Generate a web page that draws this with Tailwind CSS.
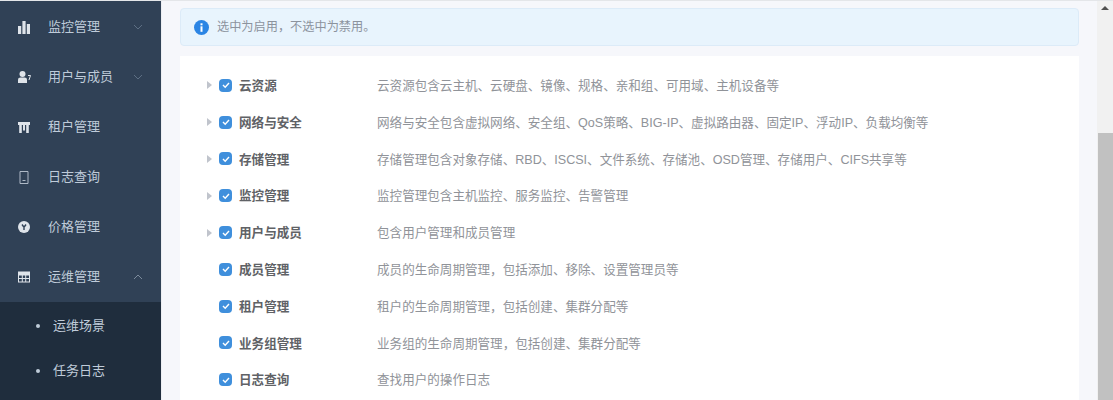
<!DOCTYPE html>
<html lang="zh-CN">
  <head>
    <meta charset="UTF-8" />
    <title>运维场景</title>
    <script src="https://cdn.jsdelivr.net/npm/@tailwindcss/browser@4"></script>
  </head>
  <body class="bg-[#f6f7fb] font-['Liberation_Sans','Noto_Sans_CJK_SC',sans-serif]">
    <div class="flex h-[400px] w-[1113px] overflow-hidden border-t border-[#e4e6e9]">
      <!-- Sidebar -->
      <div class="w-[161px] shrink-0 bg-[#304156] pt-px text-[13px] text-[#bfcbd9]">
        <div class="flex h-[50px] items-center pl-[18px] pr-[18px]">
          <svg class="h-[13px] w-3" viewBox="0 0 12 13" fill="#dfe4ea"><rect x="0" y="5" width="3.2" height="8" /><rect x="4.4" y="0" width="3.2" height="13" /><rect x="8.8" y="3" width="3.2" height="10" /></svg>
          <span class="ml-[18px] flex-1">监控管理</span>
          <svg class="h-2 w-2.5" viewBox="0 0 10 8" fill="none" stroke="#5d6f84"><path d="M1 2l4 4 4-4" /></svg>
        </div>
        <div class="flex h-[50px] items-center pl-[18px] pr-[18px]">
          <svg class="h-3 w-[13px]" viewBox="0 0 13 12" fill="#dfe4ea"><circle cx="4.5" cy="3" r="3" /><path d="M0 12V8.5Q0 6.5 2.5 6.5H6.5Q9 6.5 9 8.5V12z" /><path d="M10 4.5h2.5L11 9" fill="none" stroke="#dfe4ea" /></svg>
          <span class="ml-[17px] flex-1">用户与成员</span>
          <svg class="h-2 w-2.5" viewBox="0 0 10 8" fill="none" stroke="#5d6f84"><path d="M1 2l4 4 4-4" /></svg>
        </div>
        <div class="flex h-[50px] items-center pl-[18px] pr-[18px]">
          <svg class="h-[11px] w-3" viewBox="0 0 12 11" fill="#dfe4ea"><path d="M0 0H12V3H10.8V11H8.2V3H7V8.5H5V3H3.8V11H1.2V3H0z" /></svg>
          <span class="ml-[18px] flex-1">租户管理</span>
        </div>
        <div class="flex h-[50px] items-center pl-[18px] pr-[18px]">
          <svg class="h-[13px] w-3" viewBox="0 0 12 13" fill="none" stroke="#aeb9c6"><path d="M2 0.5H10V12.5H2zM4.5 9.5H7.5" /></svg>
          <span class="ml-[18px] flex-1">日志查询</span>
        </div>
        <div class="flex h-[50px] items-center pl-[18px] pr-[18px]">
          <svg class="h-3 w-3" viewBox="0 0 12 12"><circle cx="6" cy="6" r="6" fill="#dfe4ea" /><path d="M4 3.5L6 6.2L8 3.5M6 6.2V9" fill="none" stroke="#304156" stroke-width="1.4" /></svg>
          <span class="ml-[18px] flex-1">价格管理</span>
        </div>
        <div class="flex h-[50px] items-center pl-[18px] pr-[18px]">
          <svg class="h-3 w-3" viewBox="0 0 12 12" fill="#dfe4ea"><path d="M0 0.5H12V11.5H0zM1 4.5V7H3.8V4.5zM4.8 4.5V7H7.2V4.5zM8.2 4.5V7H11V4.5zM1 8V10.5H3.8V8zM4.8 8V10.5H7.2V8zM8.2 8V10.5H11V8z" fill-rule="evenodd" /></svg>
          <span class="ml-[18px] flex-1">运维管理</span>
          <svg class="h-2 w-2.5" viewBox="0 0 10 8" fill="none" stroke="#7c8b9c"><path d="M1 6l4-4 4 4" /></svg>
        </div>
        <div class="h-full bg-[#1f2d3d] pt-px">
          <div class="flex h-[45px] items-center pl-9">
            <span class="h-1 w-1 rounded-full bg-[#bfcbd9]"></span>
            <span class="ml-[13px]">运维场景</span>
          </div>
          <div class="flex h-[45px] items-center pl-9">
            <span class="h-1 w-1 rounded-full bg-[#bfcbd9]"></span>
            <span class="ml-[13px]">任务日志</span>
          </div>
        </div>
      </div>

      <!-- Main content -->
      <div class="w-[936px] shrink-0 border-l border-[#eceef2] pl-[18px] pr-[18px] pt-[7px]">
        <div class="flex h-[38px] items-center rounded border border-[#dcebf8] bg-[#e8f4fd] pl-[13px] text-[12.2px] text-[#8c939d]">
          <svg class="h-[15px] w-[15px]" viewBox="0 0 15 15"><circle cx="7.5" cy="7.5" r="7.5" fill="#2b85e4" /><rect x="6.5" y="6.3" width="2" height="5.5" fill="#fff" /><rect x="6.5" y="3.3" width="2" height="2" fill="#fff" /></svg>
          <span class="ml-[8px]">选中为启用，不选中为禁用。</span>
        </div>
        <div class="mt-[10px] h-[400px] bg-white pt-[11px] text-[12.57px]">
          <div class="flex h-[36.8px] items-center">
            <span class="ml-[27px] w-[12px]"><span class="block h-0 w-0 border-y-[4px] border-l-[5px] border-y-transparent border-l-[#c0c4cc]"></span></span>
            <span class="flex h-[13px] w-[13px] items-center justify-center rounded-sm bg-[#3f8fdc]"><svg class="h-2.5 w-2.5" viewBox="0 0 10 10" fill="none" stroke="#fff" stroke-width="1.4"><path d="M2 5l2.2 2.2L8 3" /></svg></span>
            <span class="ml-[7px] w-[138px] pt-[2px] font-bold text-[#606266]">云资源</span>
            <span class="pt-[2px] text-[#909399]">云资源包含云主机、云硬盘、镜像、规格、亲和组、可用域、主机设备等</span>
          </div>
          <div class="flex h-[36.8px] items-center">
            <span class="ml-[27px] w-[12px]"><span class="block h-0 w-0 border-y-[4px] border-l-[5px] border-y-transparent border-l-[#c0c4cc]"></span></span>
            <span class="flex h-[13px] w-[13px] items-center justify-center rounded-sm bg-[#3f8fdc]"><svg class="h-2.5 w-2.5" viewBox="0 0 10 10" fill="none" stroke="#fff" stroke-width="1.4"><path d="M2 5l2.2 2.2L8 3" /></svg></span>
            <span class="ml-[7px] w-[138px] pt-[2px] font-bold text-[#606266]">网络与安全</span>
            <span class="pt-[2px] text-[#909399]">网络与安全包含虚拟网络、安全组、QoS策略、BIG-IP、虚拟路由器、固定IP、浮动IP、负载均衡等</span>
          </div>
          <div class="flex h-[36.8px] items-center">
            <span class="ml-[27px] w-[12px]"><span class="block h-0 w-0 border-y-[4px] border-l-[5px] border-y-transparent border-l-[#c0c4cc]"></span></span>
            <span class="flex h-[13px] w-[13px] items-center justify-center rounded-sm bg-[#3f8fdc]"><svg class="h-2.5 w-2.5" viewBox="0 0 10 10" fill="none" stroke="#fff" stroke-width="1.4"><path d="M2 5l2.2 2.2L8 3" /></svg></span>
            <span class="ml-[7px] w-[138px] pt-[2px] font-bold text-[#606266]">存储管理</span>
            <span class="pt-[2px] text-[#909399]">存储管理包含对象存储、RBD、ISCSI、文件系统、存储池、OSD管理、存储用户、CIFS共享等</span>
          </div>
          <div class="flex h-[36.8px] items-center">
            <span class="ml-[27px] w-[12px]"><span class="block h-0 w-0 border-y-[4px] border-l-[5px] border-y-transparent border-l-[#c0c4cc]"></span></span>
            <span class="flex h-[13px] w-[13px] items-center justify-center rounded-sm bg-[#3f8fdc]"><svg class="h-2.5 w-2.5" viewBox="0 0 10 10" fill="none" stroke="#fff" stroke-width="1.4"><path d="M2 5l2.2 2.2L8 3" /></svg></span>
            <span class="ml-[7px] w-[138px] pt-[2px] font-bold text-[#606266]">监控管理</span>
            <span class="pt-[2px] text-[#909399]">监控管理包含主机监控、服务监控、告警管理</span>
          </div>
          <div class="flex h-[36.8px] items-center">
            <span class="ml-[27px] w-[12px]"><span class="block h-0 w-0 border-y-[4px] border-l-[5px] border-y-transparent border-l-[#c0c4cc]"></span></span>
            <span class="flex h-[13px] w-[13px] items-center justify-center rounded-sm bg-[#3f8fdc]"><svg class="h-2.5 w-2.5" viewBox="0 0 10 10" fill="none" stroke="#fff" stroke-width="1.4"><path d="M2 5l2.2 2.2L8 3" /></svg></span>
            <span class="ml-[7px] w-[138px] pt-[2px] font-bold text-[#606266]">用户与成员</span>
            <span class="pt-[2px] text-[#909399]">包含用户管理和成员管理</span>
          </div>
          <div class="flex h-[36.8px] items-center pl-[39px]">
            <span class="flex h-[13px] w-[13px] items-center justify-center rounded-sm bg-[#3f8fdc]"><svg class="h-2.5 w-2.5" viewBox="0 0 10 10" fill="none" stroke="#fff" stroke-width="1.4"><path d="M2 5l2.2 2.2L8 3" /></svg></span>
            <span class="ml-[7px] w-[138px] pt-[2px] font-bold text-[#606266]">成员管理</span>
            <span class="pt-[2px] text-[#909399]">成员的生命周期管理，包括添加、移除、设置管理员等</span>
          </div>
          <div class="flex h-[36.8px] items-center pl-[39px]">
            <span class="flex h-[13px] w-[13px] items-center justify-center rounded-sm bg-[#3f8fdc]"><svg class="h-2.5 w-2.5" viewBox="0 0 10 10" fill="none" stroke="#fff" stroke-width="1.4"><path d="M2 5l2.2 2.2L8 3" /></svg></span>
            <span class="ml-[7px] w-[138px] pt-[2px] font-bold text-[#606266]">租户管理</span>
            <span class="pt-[2px] text-[#909399]">租户的生命周期管理，包括创建、集群分配等</span>
          </div>
          <div class="flex h-[36.8px] items-center pl-[39px]">
            <span class="flex h-[13px] w-[13px] items-center justify-center rounded-sm bg-[#3f8fdc]"><svg class="h-2.5 w-2.5" viewBox="0 0 10 10" fill="none" stroke="#fff" stroke-width="1.4"><path d="M2 5l2.2 2.2L8 3" /></svg></span>
            <span class="ml-[7px] w-[138px] pt-[2px] font-bold text-[#606266]">业务组管理</span>
            <span class="pt-[2px] text-[#909399]">业务组的生命周期管理，包括创建、集群分配等</span>
          </div>
          <div class="flex h-[36.8px] items-center pl-[39px]">
            <span class="flex h-[13px] w-[13px] items-center justify-center rounded-sm bg-[#3f8fdc]"><svg class="h-2.5 w-2.5" viewBox="0 0 10 10" fill="none" stroke="#fff" stroke-width="1.4"><path d="M2 5l2.2 2.2L8 3" /></svg></span>
            <span class="ml-[7px] w-[138px] pt-[2px] font-bold text-[#606266]">日志查询</span>
            <span class="pt-[2px] text-[#909399]">查找用户的操作日志</span>
          </div>
        </div>
      </div>

      <!-- Scrollbar -->
      <div class="flex w-[16px] shrink-0 flex-col bg-[#f1f1f1]">
        <div class="flex h-[14px] shrink-0 items-center justify-center">
          <span class="h-0 w-0 border-x-[4px] border-b-[4px] border-x-transparent border-b-[#505050]"></span>
        </div>
        <div class="ml-px mt-[118px] h-[300px] shrink-0 bg-[#c1c1c1]"></div>
      </div>
    </div>
  </body>
</html>
